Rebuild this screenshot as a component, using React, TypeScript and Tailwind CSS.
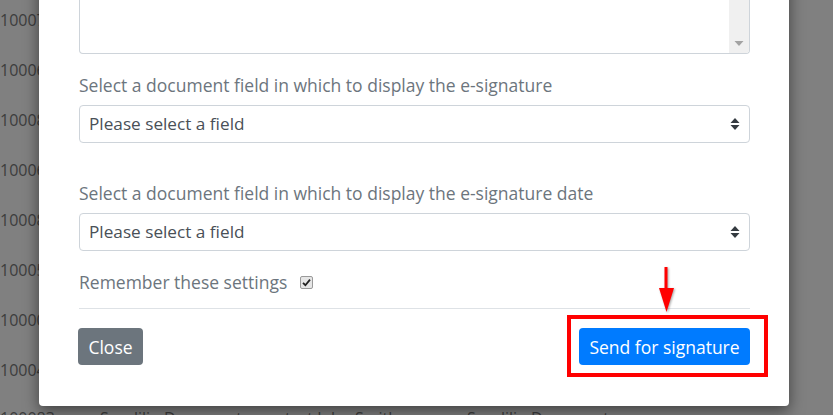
const rowIds = ['10007', '10006', '10008', '10006', '10008', '10005', '10000', '10004'];

function SortIcon() {
  return (
    <svg width="10" height="14" viewBox="0 0 10 14" className="shrink-0">
      <path d="M0.5 6 L5 1 L9.5 6 Z" fill="#343a40" />
      <path d="M0.5 8 L9.5 8 L5 13 Z" fill="#343a40" />
    </svg>
  );
}

function FieldSelect() {
  return (
    <div className="flex h-[38px] items-center justify-between rounded-[4px] border border-[#ced4da] bg-white pl-[9px] pr-[9px] text-[17.2px] text-[#495057]">
      <span>Please select a field</span>
      <SortIcon />
    </div>
  );
}

export default function App() {
  return (
    <div className="relative h-[415px] w-[833px] overflow-hidden bg-[#808080] font-['Open_Sans',sans-serif] leading-[24px]">
      {/* page behind the overlay */}
      <div className="flex flex-col pt-[8px] text-[16px] text-[#3d3d3d]">
        {rowIds.map((id, i) => (
          <div key={i} className="h-[50px]">
            {id}
          </div>
        ))}
        <div className="-mt-[2px] flex">
          <span className="w-[100px]">100083</span>
          <span className="w-[185px]">Suodilio Documents</span>
          <span className="w-[182px]">test John Smith</span>
          <span>Suodilio Documents</span>
        </div>
      </div>

      {/* modal */}
      <div className="absolute left-[39px] top-[-60px] w-[750px] rounded-b-[4px] bg-white pb-[41px] pl-[40px] pr-[39px] shadow-[0_5px_15px_rgba(0,0,0,0.5)]">
        <div className="flex h-[114px] justify-end overflow-hidden rounded-b-[4px] border border-t-0 border-[#ced4da]">
          <div className="flex w-[20px] flex-col justify-end bg-[#f0f0f0] pb-[6px]">
            <svg width="20" height="8" viewBox="0 0 20 8">
              <path d="M5.5 2 L14.5 2 L10 7 Z" fill="#a3a3a3" />
            </svg>
          </div>
        </div>

        <div className="mb-[8px] mt-[19px] text-[17.5px] text-[#6c757d]">
          Select a document field in which to display the e-signature
        </div>
        <FieldSelect />

        <div className="mb-[8px] mt-[38px] text-[17.5px] text-[#6c757d]">
          Select a document field in which to display the e-signature date
        </div>
        <FieldSelect />

        <div className="mt-[19px] flex items-center text-[17.5px] text-[#6c757d]">
          <span>Remember these settings</span>
          <span className="ml-[13px] flex h-[13px] w-[13px] items-center justify-center rounded-[2px] border border-[#9a9a9a] bg-[#e6e6e6]">
            <svg width="9" height="9" viewBox="0 0 9 9">
              <path d="M1 4.8 L3.4 7.2 L8 1.6" fill="none" stroke="#222" strokeWidth="1.8" />
            </svg>
          </span>
        </div>

        <div className="mt-[14px] h-px bg-[#dee2e6]" />

        <div className="mt-[19px] flex items-center justify-between">
          <button className="-ml-px flex h-[37px] w-[65px] items-center justify-center rounded-[4px] bg-[#6c757d] text-[17.5px] text-white">
            Close
          </button>
          <button className="flex h-[37px] w-[171px] items-center justify-center rounded-[4px] bg-[#007bff] text-[17.5px] text-white">
            Send for signature
          </button>
        </div>
      </div>

      {/* red annotation */}
      <div className="absolute left-[567px] top-[315px] h-[62px] w-[201px] border-[4px] border-[#ff0000]" />
      <svg
        className="absolute left-[655px] top-[264px]"
        width="24"
        height="52"
        viewBox="0 0 24 52"
        style={{ filter: 'drop-shadow(1px 1px 1px rgba(0,0,0,0.35))' }}
      >
        <path d="M11 3 L11 26" stroke="#ff0000" strokeWidth="3" />
        <path d="M4 24 L19 24 L11.5 48 Z" fill="#ff0000" />
      </svg>
    </div>
  );
}
